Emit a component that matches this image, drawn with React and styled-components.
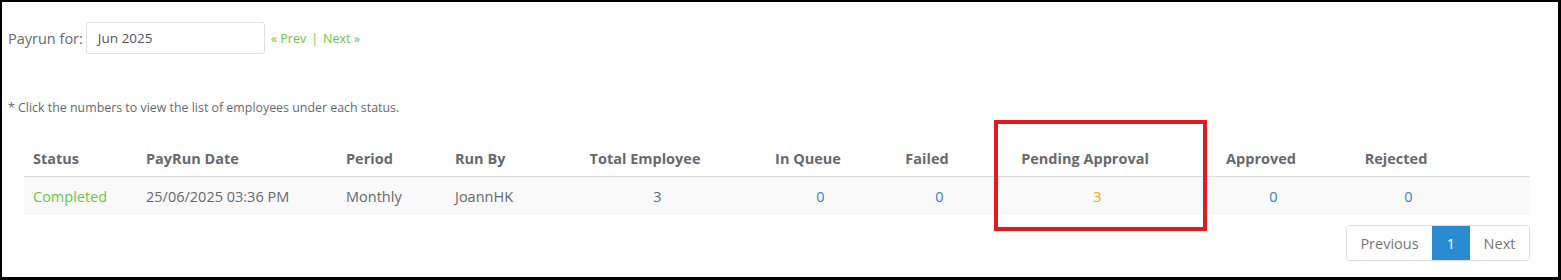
import React from 'react';
import styled, { createGlobalStyle } from 'styled-components';

const GlobalStyle = createGlobalStyle`
  html, body {
    margin: 0;
    padding: 0;
    background: #fff;
  }
  body {
    font-family: "Open Sans", "Liberation Sans", sans-serif;
    color: #676a6c;
  }
`;

const Frame = styled.div`
  position: relative;
  box-sizing: border-box;
  width: 1561px;
  height: 280px;
  border-style: solid;
  border-color: #000;
  border-width: 2px 3px 3px 2px;
  padding: 20px 0 0 6px;
  overflow: hidden;
`;

const FilterRow = styled.div`
  display: flex;
  align-items: center;
  height: 32px;
`;

const FilterLabel = styled.span`
  font-size: 14.5px;
  color: #676a6c;
  margin-right: 3px;
`;

const MonthInput = styled.div`
  box-sizing: border-box;
  width: 179px;
  height: 32px;
  border: 1px solid #e0e0e0;
  border-radius: 3px;
  padding: 0 11px;
  display: flex;
  align-items: center;
  font-size: 13.5px;
  color: #555;
`;

const NavLinks = styled.div`
  display: flex;
  align-items: center;
  margin-left: 6px;
  font-size: 12.5px;
  color: #6cc644;
`;

const NavLink = styled.a`
  color: #6cc644;
  text-decoration: none;
`;

const NavSep = styled.span`
  margin: 0 5px;
  color: #6cc644;
`;

const Note = styled.p`
  margin: 46px 0 0 0;
  font-size: 12.4px;
  line-height: 16px;
  color: #676a6c;
`;

const TableArea = styled.div`
  margin: 24px 0 0 16px;
  width: 1506px;
`;

const Table = styled.table`
  width: 1506px;
  table-layout: fixed;
  border-collapse: collapse;
`;

const Th = styled.th`
  height: 36px;
  padding: 0 ${({ $center }) => ($center ? '32px' : '8px')} 0 ${({ $center }) => ($center ? '8px' : '9px')};
  text-align: ${({ $center }) => ($center ? 'center' : 'left')};
  font-size: 14.5px;
  font-weight: 700;
  color: #676a6c;
  border-bottom: 1px solid #ddd;
  white-space: nowrap;
`;

const Row = styled.tr`
  background: #f9f9f9;
`;

const Td = styled.td`
  height: 38px;
  padding: 0 8px 0 9px;
  text-align: ${({ $center }) => ($center ? 'center' : 'left')};
  font-size: 14.5px;
  color: ${({ $tone }) =>
    $tone === 'green' ? '#6cc644' :
    $tone === 'blue' ? '#3a82c4' :
    $tone === 'orange' ? '#f7a823' : '#676a6c'};
  white-space: nowrap;
`;

const Highlight = styled.div`
  position: absolute;
  left: 992px;
  top: 118px;
  width: 213px;
  height: 111px;
  box-sizing: border-box;
  border: 4px solid #e4191f;
  pointer-events: none;
`;

const Pager = styled.div`
  display: flex;
  justify-content: flex-end;
  margin-top: 10px;
`;

const PagerGroup = styled.div`
  display: flex;
  height: 36px;
  box-sizing: border-box;
  border: 1px solid #ddd;
  border-radius: 4px;
  overflow: hidden;
`;

const PageButton = styled.span`
  display: flex;
  align-items: center;
  justify-content: center;
  width: ${({ $w }) => $w}px;
  font-size: 14.5px;
  color: ${({ $active }) => ($active ? '#fff' : '#777')};
  background: ${({ $active }) => ($active ? '#2a8bd0' : '#fff')};
`;

const columns = [
  { label: 'Status', width: 113 },
  { label: 'PayRun Date', width: 200 },
  { label: 'Period', width: 109 },
  { label: 'Run By', width: 114 },
  { label: 'Total Employee', width: 194, center: true },
  { label: 'In Queue', width: 132, center: true },
  { label: 'Failed', width: 106, center: true },
  { label: 'Pending Approval', width: 210, center: true },
  { label: 'Approved', width: 142, center: true },
  { label: 'Rejected', width: 128, center: true },
  { label: '', width: 58 },
];

const row = [
  { value: 'Completed', tone: 'green' },
  { value: '25/06/2025 03:36 PM' },
  { value: 'Monthly' },
  { value: 'JoannHK' },
  { value: '3', center: true },
  { value: '0', center: true, tone: 'blue' },
  { value: '0', center: true, tone: 'blue' },
  { value: '3', center: true, tone: 'orange' },
  { value: '0', center: true, tone: 'blue' },
  { value: '0', center: true, tone: 'blue' },
  { value: '' },
];

export default function App() {
  return (
    <>
      <GlobalStyle />
      <Frame>
        <FilterRow>
          <FilterLabel>Payrun for:</FilterLabel>
          <MonthInput>Jun 2025</MonthInput>
          <NavLinks>
            <NavLink href="#">« Prev</NavLink>
            <NavSep>|</NavSep>
            <NavLink href="#">Next »</NavLink>
          </NavLinks>
        </FilterRow>

        <Note>* Click the numbers to view the list of employees under each status.</Note>

        <TableArea>
          <Table>
            <colgroup>
              {columns.map((c, i) => <col key={i} style={{ width: c.width }} />)}
            </colgroup>
            <thead>
              <tr>
                {columns.map((c, i) => <Th key={i} $center={c.center}>{c.label}</Th>)}
              </tr>
            </thead>
            <tbody>
              <Row>
                {row.map((c, i) => (
                  <Td key={i} $center={c.center} $tone={c.tone}>{c.value}</Td>
                ))}
              </Row>
            </tbody>
          </Table>

          <Pager>
            <PagerGroup>
              <PageButton $w={85}>Previous</PageButton>
              <PageButton $w={38} $active>1</PageButton>
              <PageButton $w={59}>Next</PageButton>
            </PagerGroup>
          </Pager>
        </TableArea>

        <Highlight />
      </Frame>
    </>
  );
}
